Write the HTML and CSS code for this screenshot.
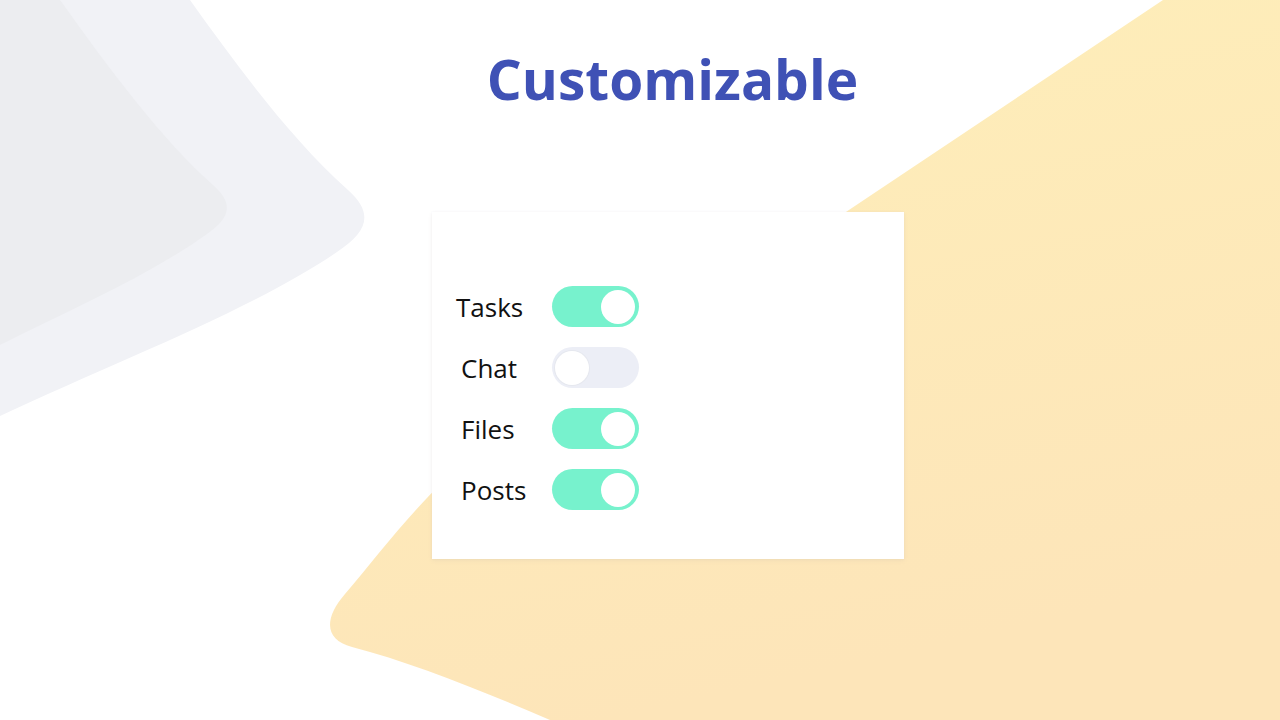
FILE: index.html
```html
<!DOCTYPE html>
<html>
<head>
<meta charset="utf-8">
<link rel="stylesheet" href="styles.css">
</head>
<body>
<svg class="bg" width="1280" height="720" viewBox="0 0 1280 720" xmlns="http://www.w3.org/2000/svg">
  <defs>
    <linearGradient id="yg" x1="0" y1="0" x2="0.3" y2="1">
      <stop offset="0" stop-color="#feefb9"/>
      <stop offset="1" stop-color="#fde5b9"/>
    </linearGradient>
  </defs>
  <path d="M190,0 C240,70 292,140 348,190 C374,213 368,232 337,252 C252,310 120,360 0,416 L0,0 Z" fill="#f1f2f6"/>
  <path d="M60,0 C110,70 162,140 214,186 C234,204 230,218 207,234 C150,275 70,310 0,345 L0,0 Z" fill="#ecedf0"/>
  <path d="M1163,0 L1280,0 L1280,720 L550,720 C480,690 410,662 352,647 C324,640 324,618 345,594 C374,560 408,515 445,480 Z" fill="url(#yg)"/>
</svg>
<main class="page">
  <h1 class="title">Customizable</h1>
  <section class="card">
    <div class="row">
      <span class="label wide">Tasks</span>
      <span class="toggle on"><span class="knob"></span></span>
    </div>
    <div class="row">
      <span class="label">Chat</span>
      <span class="toggle off"><span class="knob"></span></span>
    </div>
    <div class="row">
      <span class="label">Files</span>
      <span class="toggle on"><span class="knob"></span></span>
    </div>
    <div class="row">
      <span class="label">Posts</span>
      <span class="toggle on"><span class="knob"></span></span>
    </div>
  </section>
</main>
</body>
</html>
```
FILE: styles.css
```css
html, body {
  margin: 0;
  padding: 0;
  width: 1280px;
  height: 720px;
  overflow: hidden;
  background: #ffffff;
  font-family: "Open Sans", "Noto Sans", sans-serif;
}
.bg {
  position: absolute;
  left: 0;
  top: 0;
  z-index: 0;
}
.page {
  position: relative;
  z-index: 1;
  width: 472px;
  margin-left: 432px;
  display: flex;
  flex-direction: column;
}
.title {
  margin: 39px 0 0 0;
  padding-left: 9px;
  height: 173px;
  font-size: 55px;
  line-height: 80px;
  font-weight: 700;
  color: #3f51b5;
  text-align: center;
}
.card {
  background: #ffffff;
  height: 347px;
  box-sizing: border-box;
  padding: 74px 0 0 29px;
  box-shadow: 0 2px 4px rgba(200, 190, 170, 0.18), 0 0 2px rgba(180, 180, 220, 0.12);
  display: flex;
  flex-direction: column;
  gap: 20px;
}
.row {
  display: flex;
  align-items: center;
  height: 41px;
}
.label {
  width: 91px;
  font-size: 26px;
  color: #111111;
}
.label.wide {
  margin-left: -5px;
  width: 96px;
}
.toggle {
  width: 87px;
  height: 41px;
  border-radius: 21px;
  display: flex;
  align-items: center;
  box-sizing: border-box;
  padding: 0 4px;
}
.toggle.on {
  background: #77f2cd;
  justify-content: flex-end;
}
.toggle.off {
  background: #eceef6;
  justify-content: flex-start;
  padding: 0 3px;
}
.knob {
  width: 34px;
  height: 34px;
  border-radius: 50%;
  background: #ffffff;
}
.toggle.off .knob {
  box-shadow: 0 0 0 1px #e6e8ef;
}
```
